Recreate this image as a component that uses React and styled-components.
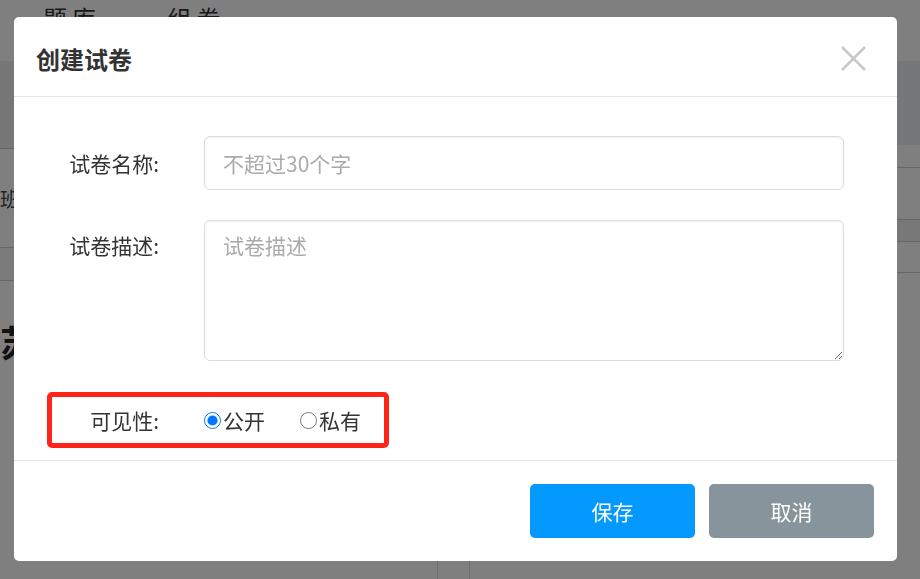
import React, { useState } from "react";
import styled, { createGlobalStyle } from "styled-components";

const GlobalStyle = createGlobalStyle`
  html, body {
    margin: 0;
    padding: 0;
    overflow: hidden;
    background: #fff;
  }
  body {
    font-family: "Noto Sans CJK SC", "Noto Sans", sans-serif;
    color: #333;
  }
  * {
    box-sizing: border-box;
  }
`;

const Page = styled.div`
  width: 920px;
  height: 579px;
  background: #fff;
`;

const TopNav = styled.div`
  height: 61px;
  display: flex;
  gap: 67px;
  padding: 2px 0 0 43px;
`;

const NavItem = styled.div`
  font-size: 24px;
  line-height: 32px;
  letter-spacing: 0.2em;
  color: #333;
`;

const Columns = styled.div`
  display: grid;
  grid-template-columns: 438px 31px 1fr;
  height: 518px;
`;

const Panel = styled.div`
  border-${(p) => p.$side}: 1px solid #ddd;
  display: flex;
  flex-direction: column;
`;

const Band = styled.div`
  height: ${(p) => p.$h}px;
  background: ${(p) => p.$bg || "#fff"};
  border-bottom: ${(p) => (p.$line ? "1px solid #ccc" : "none")};
  display: flex;
  align-items: center;
  font-size: 20px;
  color: #444;
`;

const PageTitle = styled.h2`
  margin: 36px 0 0;
  font-size: 36px;
  font-weight: 700;
  color: #222;
  line-height: 48px;
`;

const Overlay = styled.div`
  position: fixed;
  inset: 0;
  background: rgba(0, 0, 0, 0.5);
`;

const Modal = styled.div`
  margin: 17px 0 0 14px;
  width: 883px;
  height: 544px;
  background: #fff;
  border-radius: 5px;
  display: flex;
  flex-direction: column;
`;

const Header = styled.div`
  height: 80px;
  flex-shrink: 0;
  border-bottom: 1px solid #e5e5e5;
  display: flex;
  align-items: center;
  justify-content: space-between;
  padding: 3px 30px 0 22px;
`;

const Title = styled.h3`
  margin: 0;
  font-size: 24px;
  font-weight: 700;
  color: #333;
`;

const CloseButton = styled.button`
  border: none;
  background: none;
  padding: 0;
  width: 27px;
  height: 27px;
  display: flex;
  cursor: pointer;
`;

const Body = styled.div`
  flex: 1;
  padding-top: 39px;
  display: flex;
  flex-direction: column;
`;

const Row = styled.div`
  display: grid;
  grid-template-columns: ${(p) => p.$labelWidth || 145}px 640px;
  column-gap: 45px;
  align-items: ${(p) => (p.$top ? "start" : "center")};
  margin-bottom: ${(p) => p.$mb || 0}px;
`;

const Label = styled.label`
  text-align: right;
  font-size: 21px;
  line-height: 30px;
  color: #333;
  padding-top: ${(p) => (p.$top ? 10 : 0)}px;
`;

const fieldBase = `
  width: 640px;
  border: 1px solid #dcdcdc;
  border-radius: 6px;
  box-shadow: inset 0 1px 2px rgba(0, 0, 0, 0.06);
  font-family: "Noto Sans CJK SC", "Noto Sans", sans-serif;
  font-size: 21px;
  color: #333;
  outline: none;
  &::placeholder {
    color: #aaa;
  }
`;

const TextInput = styled.input`
  ${fieldBase}
  height: 54px;
  padding: 0 18px;
`;

const TextArea = styled.textarea`
  ${fieldBase}
  height: 141px;
  padding: 9px 18px;
  line-height: 30px;
  resize: vertical;
`;

const Highlight = styled.div`
  margin: 0 0 0 33px;
  width: 342px;
  height: 56px;
  border: 5px solid #ff2418;
  border-radius: 5px;
  display: flex;
  align-items: center;
`;

const RadioGroup = styled.div`
  display: flex;
  align-items: center;
  gap: 35px;
`;

const RadioOption = styled.label`
  display: flex;
  align-items: center;
  gap: 2px;
  font-size: 21px;
  line-height: 30px;
  color: #333;
  cursor: pointer;
`;

const Radio = styled.input`
  width: 17px;
  height: 17px;
  margin: 0;
  accent-color: #0075ff;
`;

const Footer = styled.div`
  height: 101px;
  flex-shrink: 0;
  border-top: 1px solid #e5e5e5;
  display: flex;
  justify-content: flex-end;
  align-items: flex-start;
  gap: 14px;
  padding: 23px 23px 0 0;
`;

const Button = styled.button`
  width: 165px;
  height: 54px;
  border: none;
  border-radius: 5px;
  background: ${(p) => (p.$primary ? "#0399ff" : "#88949b")};
  color: #fff;
  font-family: "Noto Sans CJK SC", "Noto Sans", sans-serif;
  font-size: 21px;
  cursor: pointer;
`;

export default function App() {
  const [visibility, setVisibility] = useState("public");

  return (
    <>
      <GlobalStyle />
      <Page>
        <TopNav>
          <NavItem>题库</NavItem>
          <NavItem>组卷</NavItem>
        </TopNav>
        <Columns>
          <Panel $side="right">
            <Band $h={88} $bg="#eeeeee" $line />
            <Band $h={99} $line>班级</Band>
            <Band $h={33} $bg="#f4f4f4" $line />
            <PageTitle>苏州</PageTitle>
          </Panel>
          <div />
          <Panel $side="left">
            <Band $h={84} $bg="#e9f1f7" />
            <Band $h={23} $line />
            <Band $h={52} $line />
            <Band $h={22} $bg="#f0f0f0" $line />
            <Band $h={31} $line />
          </Panel>
        </Columns>
      </Page>

      <Overlay>
        <Modal>
          <Header>
            <Title>创建试卷</Title>
            <CloseButton aria-label="关闭">
              <svg width="27" height="27" viewBox="0 0 27 27">
                <path d="M2 2 L25 25 M25 2 L2 25" stroke="#c8c8c8" strokeWidth="2.6" fill="none" />
              </svg>
            </CloseButton>
          </Header>

          <Body>
            <Row $mb={30}>
              <Label>试卷名称:</Label>
              <TextInput placeholder="不超过30个字" />
            </Row>
            <Row $top $mb={31}>
              <Label $top>试卷描述:</Label>
              <TextArea placeholder="试卷描述" />
            </Row>
            <Highlight>
              <Row $labelWidth={107}>
                <Label>可见性:</Label>
                <RadioGroup>
                  <RadioOption>
                    <Radio
                      type="radio"
                      name="visibility"
                      checked={visibility === "public"}
                      onChange={() => setVisibility("public")}
                    />
                    公开
                  </RadioOption>
                  <RadioOption>
                    <Radio
                      type="radio"
                      name="visibility"
                      checked={visibility === "private"}
                      onChange={() => setVisibility("private")}
                    />
                    私有
                  </RadioOption>
                </RadioGroup>
              </Row>
            </Highlight>
          </Body>

          <Footer>
            <Button $primary>保存</Button>
            <Button>取消</Button>
          </Footer>
        </Modal>
      </Overlay>
    </>
  );
}
